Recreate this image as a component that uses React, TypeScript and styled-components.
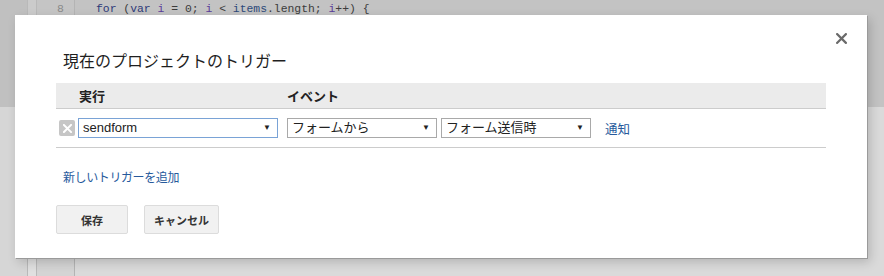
import React, { ReactElement } from 'react';
import styled, { createGlobalStyle } from 'styled-components';

const GlobalStyle = createGlobalStyle`
  html, body {
    margin: 0;
    padding: 0;
    height: 100%;
    overflow: hidden;
  }
  body {
    font-family: "Liberation Sans", Arial, "Noto Sans CJK JP", sans-serif;
    color: #222222;
  }
`;

const SPLIT = '107px';

const Editor = styled.div`
  display: flex;
  height: 100vh;
  position: relative;
`;

const Rail = styled.div<{ w: number; top: string; bottom: string; edge?: boolean }>`
  width: ${(p) => p.w}px;
  flex-shrink: 0;
  background: linear-gradient(${(p) => p.top} 0 ${SPLIT}, ${(p) => p.bottom} ${SPLIT});
  border-right: ${(p) => (p.edge ? '1px solid #b9b9b9' : 'none')};
`;

const Gutter = styled.div`
  width: 38px;
  flex-shrink: 0;
  background: linear-gradient(#c5c5c5 0 ${SPLIT}, #d4d4d4 ${SPLIT});
  border-right: 1px solid #b4b4b4;
  font-family: "Liberation Mono", monospace;
  font-size: 11.5px;
  color: #8a8a8a;
  text-align: right;
  padding-right: 10px;
  box-sizing: border-box;
`;

const CodeArea = styled.div`
  flex: 1;
  background: linear-gradient(#c3c3c3 0 ${SPLIT}, #dadada ${SPLIT});
  font-family: "Liberation Mono", monospace;
  font-size: 11.4px;
  padding-left: 21px;
`;

const Lines = styled.div`
  padding-top: 1px;
  line-height: 16px;
  white-space: pre;
`;

const Tok = styled.span<{ c?: string }>`
  color: ${(p) => p.c || '#3c3c3c'};
`;

const Dialog = styled.div`
  position: absolute;
  top: 15px;
  left: 15px;
  width: 852px;
  height: 243px;
  box-sizing: border-box;
  background: #ffffff;
  padding: 37px 41px 0;
  box-shadow: 1px 1px 0 #9a9a9a, 3px 4px 10px rgba(0, 0, 0, 0.18);
`;

const CloseButton = styled.button`
  position: absolute;
  top: 16px;
  right: 19px;
  width: 14px;
  height: 14px;
  padding: 0;
  border: none;
  background: none;
  display: flex;
  align-items: center;
  justify-content: center;
`;

const Title = styled.h2`
  margin: 0 0 11px 7px;
  font-family: "Liberation Sans", "Noto Sans CJK JP", sans-serif;
  font-weight: normal;
  font-size: 16px;
  line-height: 20px;
  color: #1f1f1f;
`;

const HeaderRow = styled.div`
  display: flex;
  height: 25px;
  align-items: center;
  background: #ebebeb;
  border-bottom: 1px solid #cccccc;
`;

const HeaderCell = styled.div<{ w: number }>`
  width: ${(p) => p.w}px;
  font-family: "Liberation Sans", "Noto Sans CJK JP", sans-serif;
  font-weight: bold;
  font-size: 13px;
  color: #222;
`;

const TriggerRow = styled.div`
  display: flex;
  align-items: center;
  padding: 9px 0 9px 3px;
  border-bottom: 1px solid #cccccc;
`;

const RemoveIcon = styled.div`
  width: 16px;
  height: 16px;
  border-radius: 2px;
  background: #c6c6c6;
  display: flex;
  align-items: center;
  justify-content: center;
  margin-right: 3px;
`;

const Select = styled.div<{ w: number; focused?: boolean; gap: number }>`
  width: ${(p) => p.w}px;
  height: 20px;
  box-sizing: border-box;
  margin-right: ${(p) => p.gap}px;
  border: 1px solid ${(p) => (p.focused ? '#7aa3d6' : '#a9a9a9')};
  background: #fff;
  display: flex;
  align-items: center;
  justify-content: space-between;
  padding: 0 6px 0 4px;
  font-family: "Liberation Sans", "Noto Sans CJK JP", sans-serif;
  font-size: 13px;
  line-height: 18px;
  color: #222;
`;

const Arrow = styled.span`
  font-size: 8px;
  color: #222;
`;

const Link = styled.a<{ size?: number }>`
  color: #275a9c;
  text-decoration: none;
  font-family: "Liberation Sans", "Noto Sans CJK JP", sans-serif;
  font-size: ${(p) => p.size || 12}px;
  cursor: pointer;
`;

const AddLine = styled.div`
  margin: 21px 0 0 7px;
  line-height: 16px;
  letter-spacing: -0.4px;
`;

const Buttons = styled.div`
  display: flex;
  gap: 16px;
  margin-top: 19px;
`;

const Button = styled.button`
  min-width: 72px;
  height: 29px;
  padding: 0 9px;
  border: 1px solid #dcdcdc;
  border-radius: 2px;
  background: #f1f1f1;
  font-family: "Liberation Sans", "Noto Sans CJK JP", sans-serif;
  font-weight: bold;
  font-size: 11px;
  color: #333;
`;

function XIcon({ color, size, stroke }: { color: string; size: number; stroke: number }): ReactElement {
  return (
    <svg width={size} height={size} viewBox="0 0 10 10">
      <path d="M1 1 L9 9 M9 1 L1 9" stroke={color} strokeWidth={stroke} strokeLinecap="square" />
    </svg>
  );
}

function App(): ReactElement {
  return (
    <>
      <GlobalStyle />
      <Editor>
        <Rail w={27} top="#c0c0c0" bottom="#d6d6d6" edge />
        <Rail w={8} top="#cbcbcb" bottom="#e0e0e0" edge />
        <Gutter>
          <Lines>
            <div>8</div>
          </Lines>
        </Gutter>
        <CodeArea>
          <Lines>
            <div>
              <Tok c="#2e3a78">for</Tok> <Tok>(</Tok>
              <Tok c="#2e3a78">var</Tok> <Tok c="#5a3c9a">i</Tok> <Tok>= 0; </Tok>
              <Tok c="#5a3c9a">i</Tok> <Tok>&lt; </Tok>
              <Tok c="#2e4a7a">items</Tok>
              <Tok>.length; </Tok>
              <Tok c="#5a3c9a">i</Tok>
              <Tok>++) {'{'}</Tok>
            </div>
          </Lines>
        </CodeArea>

        <Dialog>
          <CloseButton aria-label="閉じる">
            <XIcon color="#6a6a6a" size={11} stroke={2} />
          </CloseButton>
          <Title>現在のプロジェクトのトリガー</Title>
          <HeaderRow>
            <HeaderCell w={23} />
            <HeaderCell w={208}>実行</HeaderCell>
            <HeaderCell w={200}>イベント</HeaderCell>
          </HeaderRow>
          <TriggerRow>
            <RemoveIcon>
              <XIcon color="#ffffff" size={9} stroke={2.2} />
            </RemoveIcon>
            <Select w={200} gap={9} focused>
              <span>sendform</span>
              <Arrow>▼</Arrow>
            </Select>
            <Select w={150} gap={4}>
              <span>フォームから</span>
              <Arrow>▼</Arrow>
            </Select>
            <Select w={150} gap={14}>
              <span>フォーム送信時</span>
              <Arrow>▼</Arrow>
            </Select>
            <Link size={12.5}>通知</Link>
          </TriggerRow>
          <AddLine>
            <Link>新しいトリガーを追加</Link>
          </AddLine>
          <Buttons>
            <Button>保存</Button>
            <Button>キャンセル</Button>
          </Buttons>
        </Dialog>
      </Editor>
    </>
  );
}

export default App;
